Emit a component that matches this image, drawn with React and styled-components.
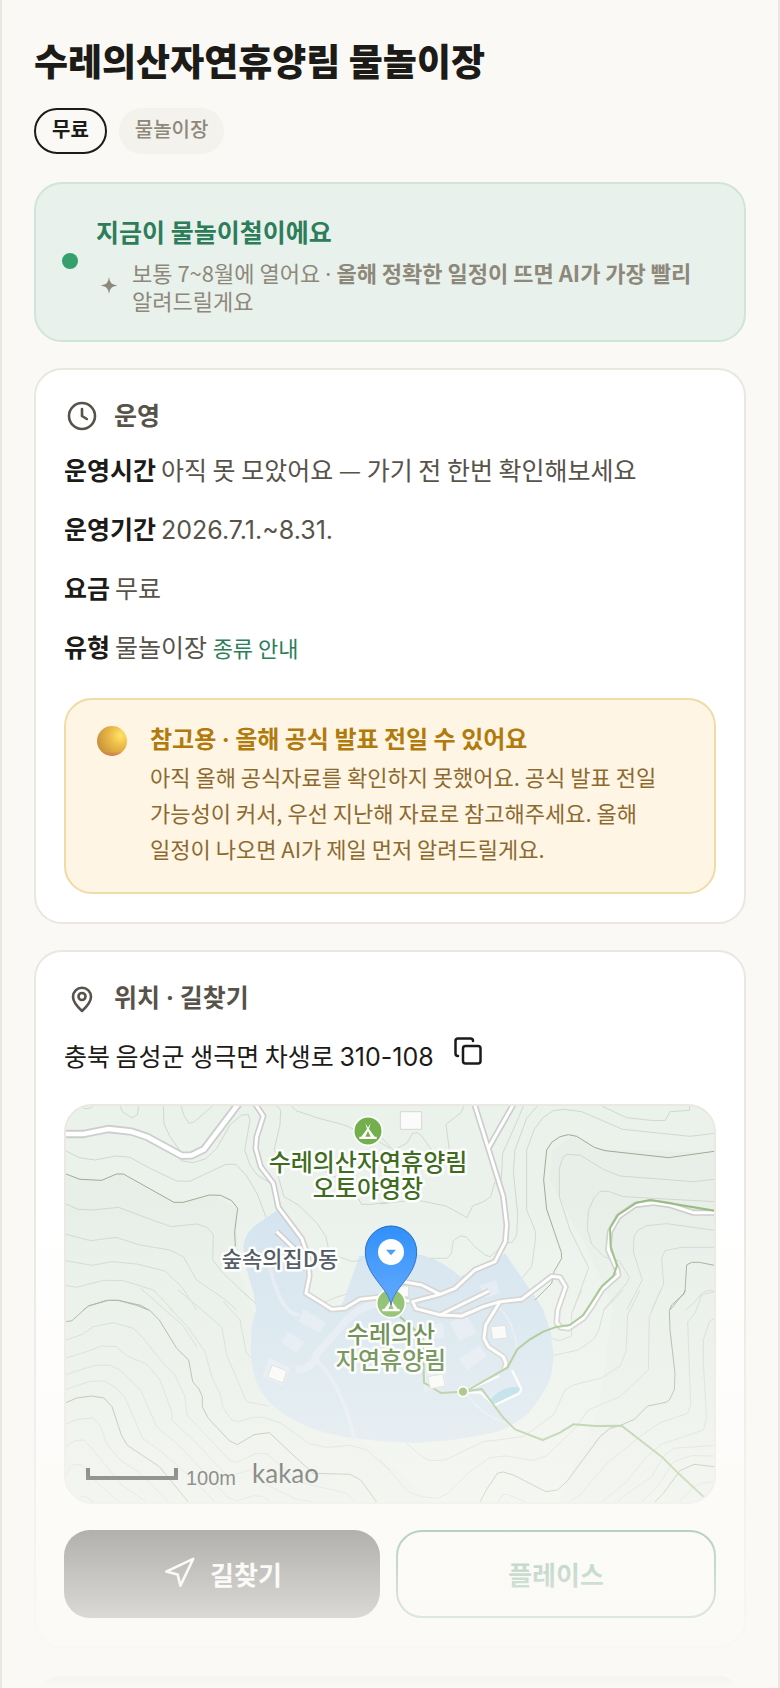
import React from 'react';
import styled, { createGlobalStyle } from 'styled-components';
import { Copy, Navigation } from 'lucide-react';

const GlobalStyle = createGlobalStyle`
    *{
        box-sizing: border-box;
    }
    body{
        margin: 0;
        background: #faf9f5;
        color: #1c1b18;
        font-family: "Noto Sans CJK KR", "Noto Sans", sans-serif;
        word-break: keep-all;
    }
    h1, h2, h3, p, dl, dd{
        margin: 0;
    }
`;

const Page = styled.main`
    position: relative;
    height: 100vh;
    overflow: hidden;
    padding: 36px 32px 0;
    border: solid #e9e7e0;
    border-width: 0 2px;
`;

const PageTitle = styled.h1`
    font-size: 37px;
    line-height: 48px;
    font-weight: 900;
`;

const Chips = styled.div`
    display: flex;
    gap: 12px;
    margin: 24px 0 28px;
`;

const Chip = styled.span`
    display: flex;
    align-items: center;
    height: 46px;
    padding: 0 16px 6px;
    border-radius: 23px;
    border: ${props => props.$outlined ? '2px solid #1c1b18' : 'none'};
    background: ${props => props.$outlined ? 'transparent' : '#f3f2ed'};
    color: ${props => props.$outlined ? '#1c1b18' : '#8e887b'};
    font-size: 20px;
    font-weight: ${props => props.$outlined ? 700 : 500};
`;

const Season = styled.section`
    display: flex;
    align-items: center;
    gap: 18px;
    padding: 24px 26px 26px;
    border: 2px solid #cfe5d9;
    border-radius: 28px;
    background: #e8f1eb;

    h2{
        color: #2d7d5a;
        font-size: 25px;
        line-height: 46px;
    }
`;

const SeasonDot = styled.span`
    flex: none;
    width: 16px;
    height: 16px;
    border-radius: 50%;
    background: #35a06b;
`;

const SeasonNote = styled.div`
    display: flex;
    align-items: center;
    gap: 10px;
    margin-top: 4px;
    color: #8e887b;
    font-size: 22px;
    line-height: 28px;

    svg{
        flex: none;
    }
`;

const Card = styled.section`
    margin-top: 26px;
    padding: 28px;
    border: 2px solid #e9e7e0;
    border-radius: 28px;
    background: #fff;
`;

const CardHeading = styled.header`
    display: flex;
    align-items: center;
    gap: 14px;
    height: 36px;
    margin-bottom: 15px;
    color: #57534a;

    h2{
        padding-bottom: 4px;
        font-size: 25px;
        line-height: 32px;
    }
`;

const InfoList = styled.dl`
    display: flex;
    flex-direction: column;
    gap: 18px;
`;

const InfoRow = styled.div`
    display: flex;
    align-items: baseline;
    gap: 5px;
    height: 41px;
    font-size: 25px;
    line-height: 41px;

    dt{
        font-weight: 700;
    }
    dd{
        color: #57534a;
    }
`;

const Latin = styled.span`
    font-family: Inter, sans-serif;
    line-height: 1;
`;

const GuideLink = styled.a`
    color: #2d7d5a;
    font-size: 22px;
    text-decoration: none;
`;

const Notice = styled.aside`
    display: flex;
    gap: 20px;
    margin-top: 31px;
    padding: 20px 28px 26px;
    border: 2px solid #efdba6;
    border-radius: 28px;
    background: #fff5e4;
    color: #8c6a2f;
    font-size: 22px;
    line-height: 36px;

    svg{
        flex: none;
        margin-top: 3px;
    }
    h3{
        margin-bottom: 2px;
        color: #b17a0d;
        font-size: 24px;
    }
`;

const Address = styled.div`
    display: flex;
    align-items: flex-start;
    gap: 14px;
    height: 50px;
    margin-bottom: 23px;
    font-size: 25px;
    line-height: 48px;
`;

const CopyButton = styled.button`
    display: flex;
    align-items: center;
    justify-content: center;
    width: 40px;
    height: 40px;
    padding: 0;
    border: 0;
    background: none;
    color: #1c1b18;
`;

const MapFrame = styled.div`
    height: 400px;
    overflow: hidden;
    border: 2px solid #ebe7e1;
    border-radius: 28px;
    background: #ebf2ec;

    svg{
        display: block;
        width: 100%;
        height: 100%;
    }
`;

const MapLabel = styled.text`
    fill: ${props => props.$color || '#3f6d1f'};
    stroke: #fff;
    stroke-width: 5px;
    stroke-linejoin: round;
    paint-order: stroke;
    font-size: ${props => props.$small ? 22 : 24}px;
    font-weight: 500;
    text-anchor: middle;
`;

const ScaleText = styled.text`
    font-family: "Liberation Sans", sans-serif;
    font-size: 20px;
`;

const KakaoMark = styled.text`
    font-family: Lato, sans-serif;
    font-size: 26px;
`;

const Actions = styled.div`
    display: flex;
    gap: 16px;
    margin-top: 26px;
`;

const ActionButton = styled.button`
    flex: 1 1 0;
    display: flex;
    align-items: center;
    justify-content: center;
    gap: 14px;
    height: 88px;
    padding: 0 16px 2px;
    border: ${props => props.$primary ? '0' : '2px solid #2d7d5a'};
    border-radius: 26px;
    background: ${props => props.$primary ? '#1c1b18' : '#fff'};
    color: ${props => props.$primary ? '#fff' : '#2d7d5a'};
    font-family: inherit;
    font-size: 26px;
    font-weight: 700;
`;

const NextCard = styled.section`
    height: 120px;
    margin-top: 28px;
    border-radius: 28px;
    background: #1c1b18;
`;

const Fade = styled.div`
    position: absolute;
    left: 0;
    right: 0;
    bottom: 0;
    height: 484px;
    background: linear-gradient(rgba(250, 249, 245, 0), #faf9f5);
    pointer-events: none;
`;

function ClockIcon(){
    return(
        <svg width="36" height="36" fill="none" stroke="currentColor" strokeWidth="2.6" strokeLinecap="round" strokeLinejoin="round" aria-hidden="true">
            <circle cx="18" cy="18" r="13"/>
            <path d="M18 11v7l4.8 3"/>
        </svg>
    )
}

function PinIcon(){
    return(
        <svg width="36" height="36" fill="none" stroke="currentColor" strokeWidth="2.6" strokeLinejoin="round" aria-hidden="true">
            <path d="M18 31C13.6 27 9 22.4 9 16.8a9 9 0 0 1 18 0c0 5.600-4.600 10.200-9 14.200z"/>
            <circle cx="18" cy="16.500" r="3.500"/>
        </svg>
    )
}

function SparkIcon(){
    return(
        <svg width="26" height="26" fill="currentColor" aria-hidden="true">
            <path d="M13 4c1 6 2.500 7.500 8.500 8.500-6 1-7.500 2.500-8.500 8.500-1-6-2.500-7.500-8.500-8.500 6-1 7.500-2.500 8.500-8.500z"/>
        </svg>
    )
}

function BallIcon(){
    return(
        <svg width="36" height="36" aria-hidden="true">
            <defs>
                <radialGradient id="ball" cx="0.78" cy="0.32" r="0.8">
                    <stop offset="0" stopColor="#ffe566"/>
                    <stop offset="0.45" stopColor="#ecbb48"/>
                    <stop offset="1" stopColor="#c9933c"/>
                </radialGradient>
                <linearGradient id="ballShade" x2="0" y2="1">
                    <stop offset="0.85" stopColor="#d8705c" stopOpacity="0"/>
                    <stop offset="1" stopColor="#d8705c" stopOpacity="0.8"/>
                </linearGradient>
            </defs>
            <circle cx="18" cy="18" r="15" fill="url(#ball)"/>
            <circle cx="18" cy="18" r="15" fill="url(#ballShade)"/>
        </svg>
    )
}

// map geometry, split in quarters; every quarter has its own origin, three units to a pixel
const quarters = [
    {
        name: 'nw',
        origin: '-48 -48',
        contours: [
            '95,50 105,56 122,54 128,48',
            '210,48 218,66 246,84 262,74 266,48',
            '340,48 342,102 360,140 392,185',
            '393,48 402,76 416,100 432,96 488,48',
            '48,183 88,203 136,210 196,198 240,202 300,235 380,273 420,274 470,250 528,223 558,223 590,258 622,312 648,382',
            '392,212 430,218 468,206 500,175 540,105 575,75 595,74 600,90 584,180 600,225 622,255 670,285',
            '680,48 692,60 690,105 672,180 690,205 685,260 702,320 745,345 800,398 828,440 835,475',
            '725,48 738,62 810,86 880,104 960,138 1020,175',
            '820,240 880,275 910,300 935,343 965,343 1020,335',
            '48,342 85,358 128,360 206,352 290,384 364,410 440,402 470,412 490,432 488,510 520,550 618,642',
            '48,433 122,452 198,442 270,465 360,480 400,500 440,570 520,625 560,660',
            '48,512 126,526 186,515 260,522 345,543 395,590 440,660',
            '48,586 80,592 160,571 220,572 310,600 368,660',
            '865,500 905,514 935,512',
            '815,640 850,625 890,612'
        ],
        majors: [
            '48,252 90,268 155,271 200,252 220,252 372,337 400,337 478,315 512,316 545,332 563,355 554,425 556,470',
            '100,660 115,648 170,631 205,631 260,646 295,660'
        ]
    },
    {
        name: 'ne',
        origin: '942 -48',
        contours: [
            '252,48 243,68 198,103 208,180',
            '0,138 40,180 80,160 98,130 112,128 125,138 155,180',
            '0,342 100,330 120,332 198,348 261,383 278,348 315,333 332,320 345,275',
            '430,48 412,92 368,190 364,268 352,275',
            '472,48 440,85 405,180 400,245 413,370 410,435 397,457 380,458 330,500 315,495 285,470 258,440 240,438 220,452 214,492 200,505 150,505',
            '425,565 455,530 465,460 467,425 440,360 440,180 463,118 490,82 520,62 550,58 605,65 728,118 930,139 1003,130',
            '665,48 740,83 820,92 856,91 870,65 928,61 930,48',
            '580,660 626,533 570,420 538,320 538,235 550,200 562,193 602,196 670,238 720,258 940,275 1003,268',
            '700,510 672,500 635,462 622,418 625,362 643,322 660,304 685,304 730,320 1003,335',
            '670,660 740,580 748,562 720,515 690,500',
            '740,660 787,570 760,485 762,440 775,420 800,407 860,401 1003,421',
            '815,660 851,582 845,505 855,482 905,472 1003,472',
            '918,660 940,640 968,608 990,600 1003,605'
        ],
        majors: [
            '465,630 515,580 522,545 545,505 544,487 500,358 491,270 500,180 515,157 540,140 565,134 590,139 643,172 675,182 866,203 1003,184',
            '870,660 915,605 920,525 935,517 958,517 1003,526'
        ]
    },
    {
        name: 'sw',
        origin: '-48 552',
        contours: [
            '360,55 415,113 465,185 485,260 510,310 520,355 545,390 565,395 610,382 640,382 690,398 780,462 830,472 900,466 950,480 1020,540',
            '272,-5 400,108 440,170',
            '384,0 430,38 516,112 530,195 562,270 590,335 655,348',
            '572,0 615,38',
            '520,35 570,90 588,185 602,203',
            '48,150 100,132 130,110 190,98 250,115 280,145 340,220 375,255 405,320 411,375 540,512 560,517 620,490 650,492 700,535 760,580 850,600 890,610 915,636',
            '48,204 110,185 155,168 198,170 235,200 290,222 330,270 365,365 365,390 430,450 535,560 600,540 640,580 740,628 785,635',
            '48,254 90,240 135,226 180,226 210,240 272,300 320,410 385,465 480,565 530,620 560,632 612,617 640,620 660,634',
            '48,298 120,274 165,273 200,295 225,323 278,445 340,490 420,560 495,636',
            '48,402 80,388 130,384 150,405 170,460 210,510 265,545 355,636',
            '48,468 75,452 102,450 130,480 210,580 288,636',
            '48,557 60,532 75,522 95,526 110,545 160,595 208,636',
            '85,628 95,618 112,622 132,636'
        ],
        majors: [
            '48,95 66,92 115,48 175,31 205,31 272,46 300,62 328,90 380,175 416,210 428,275 447,297 457,320 457,350 475,385 538,452 562,464 612,434 658,428 740,505 790,550 900,553 932,570 980,636',
            '48,338 80,324 125,318 162,324 186,350 214,435 232,466 328,530 415,636'
        ]
    },
    {
        name: 'se',
        origin: '942 552',
        contours: [
            '605,0 575,70 575,138 538,152 514,145',
            '730,0 672,60 655,125 640,148 595,180 522,196',
            '780,0 743,75 738,185 720,228 662,265 580,285 555,300 522,373 430,440 310,455 195,510 150,512 125,500 80,460',
            '842,0 808,80 805,240 720,320 625,360 590,410 500,497 460,511 375,498 330,503 270,545 200,612 172,625 125,620 85,605 0,510',
            '1003,5 965,15 945,70 923,95 932,345 922,370 840,398 780,440 680,520 600,615 568,636',
            '1003,85 988,95 970,150 970,220 980,385 970,420 845,462 800,500 740,575 665,636',
            '1003,466 880,475 850,500 815,560 740,612 712,636',
            '1003,498 935,497 880,515 840,580 785,636',
            '1003,576 960,580 940,592 895,636',
            '355,636 368,615 380,613 438,636'
        ],
        majors: [
            '915,0 912,12 875,45 868,62 870,120 885,250 883,300 868,330 858,337 803,348 763,388 720,407 690,415 660,440 560,575 532,600 498,605 400,555 370,546 352,550 320,598 300,636',
            '825,636 850,610 900,542 942,523 1003,530'
        ]
    }
];

// roads, trails and buildings share the same units but one origin
const wideRoads = [
    '-10,84 52,84 127,69 197,77 242,92 347,149 377,148 414,130 520,-10'
];

const roads = [
    '565,-10 592,30 572,92 569,127 584,182 622,232 637,304 707,397 727,452 730,512 720,562 797,610 837,607 882,580 937,574 1030,585',
    '632,377 687,430',
    '1224,-10 1267,127 1312,272 1322,357 1318,407 1287,467 1227,492 1167,547 1122,565 1040,587 1050,608 1122,627 1187,630 1252,602 1302,587 1367,580 1457,511 1482,514 1499,542 1475,612 1472,650 1484,664 1507,667 1552,637 1577,602 1607,552 1657,507 1654,492 1627,432 1632,377 1657,332 1707,297 1762,290 1812,297 1882,320 1950,320',
    '1345,-10 1267,127',
    '1000,525 1067,537 1122,565',
    '1122,627 1269,555',
    '1302,587 1259,657 1254,697 1267,722 1312,752 1320,772 1315,790'
];

const trails = [
    '1945,314 1752,282 1712,290 1656,327 1632,367 1634,422 1653,479 1642,510 1609,539 1552,627 1512,657 1467,664 1432,677 1392,700 1354,730 1325,784 1207,852 1192,857',
    '1192,857 1247,849 1312,935 1347,970 1430,1002 1482,980 1522,955 1587,960 1667,959 1787,1052 1837,1102 1914,1174',
    '1192,857 1125,861 1074,830 1070,692 1002,632'
];

const halls = [
    '1003,17 1067,17 1067,70 1003,70',
    '990,540 1028,540 1028,572 990,572',
    '1274,662 1318,658 1324,696 1280,700',
    '1085,812 1130,804 1138,840 1093,848',
    '618,777 663,795 650,831 605,813'
];

const paleLots = [
    '712,610 778,648 762,680 698,646',
    '665,678 716,708 692,742 646,708',
    '1150,650 1200,625 1232,680 1180,705',
    '1178,760 1240,718 1262,750 1205,792',
    '610,755 672,785 652,840 590,810',
    '1075,800 1132,790 1142,840 1075,860',
    '1240,540 1290,522 1302,560 1262,576',
    '1100,655 1130,650 1134,695 1100,700'
];

function TentMark({ x, y, fill }){
    return(
        <g transform={`translate(${x} ${y})`}>
            <circle r="43" fill={fill} stroke="#fff" strokeWidth="5"/>
            <path d="M-8-23 0-10 8-23 3-6 20 17H26V24H-26V17H-20L-3-6z" fill="#fff"/>
            <path d="M0 0 8 17H-8z" fill={fill}/>
        </g>
    )
}

function ForestMap(){
    return(
        <svg viewBox="0 0 648 396" preserveAspectRatio="xMidYMid slice" role="img" aria-label="수레의산자연휴양림 지도">
            <defs>
                <linearGradient id="pin" x2="0" y2="1">
                    <stop offset="0" stopColor="#258bfa"/>
                    <stop offset="1" stopColor="#3b95ff"/>
                </linearGradient>
            </defs>
            <g transform="scale(0.333333)" fill="none" strokeLinejoin="round">
                <path d="M0 210 100 223 165 205 325 290 440 268 510 305 520 500 660 880 900 1010 1100 1188H0zM1480 1188 1600 900 1640 600 1560 420 1450 220 1460 130 1520 90 1600 130 1944 140V1188z" fill="#e8efe9"/>
                <path d="M635 312 562 362Q530 395 532 427L542 492 564 567 570 612 557 662 554 737Q560 830 597 872 640 930 752 972 860 1005 1032 1010 1180 1005 1292 977 1340 960 1382 927 1425 880 1454 817L1463 752 1455 682 1432 612 1412 580 1317 442 1287 467 1227 492 1182 512Q1120 455 1052 444L880 450 837 572 822 607 797 610 722 562 732 512 717 412z" fill="#d4e4ef"/>
                <g stroke="#e1eaf3" strokeWidth="12">
                    <path d="M600 440Q625 550 650 590T700 625"/>
                    <path d="M945 590Q880 600 840 645L752 745Q742 790 690 792" strokeWidth="22"/>
                    <path d="M750 760Q830 840 865 1000"/>
                    <path d="M1300 605Q1345 650 1353 730M1205 868Q1250 930 1320 950" strokeWidth="6"/>
                </g>
                {paleLots.map(lot => <polygon key={lot} points={lot} fill="#e1eaf3"/>)}
                {quarters.map(quarter => (
                    <g key={quarter.name} transform={`translate(${quarter.origin})`} strokeWidth="3">
                        <g stroke="#cfd8cf">
                            {quarter.contours.map(line => <polyline key={line} points={line}/>)}
                        </g>
                        <g stroke="#9eab94">
                            {quarter.majors.map(line => <polyline key={line} points={line}/>)}
                        </g>
                    </g>
                ))}
                <path d="M1270 885Q1310 835 1365 845V862L1285 897z" fill="#a5d6e8"/>
                <path d="M1205 852 1300 810M1338 793 1366 850 1360 862 1285 898 1245 860H1205" stroke="#fff" strokeWidth="7"/>
                <g stroke="#cdcdcd">
                    {wideRoads.map(line => <polyline key={line} points={line} strokeWidth="25"/>)}
                    {roads.map(line => <polyline key={line} points={line} strokeWidth="19"/>)}
                </g>
                <g stroke="#fff">
                    {wideRoads.map(line => <polyline key={line} points={line} strokeWidth="14"/>)}
                    {roads.map(line => <polyline key={line} points={line} strokeWidth="9"/>)}
                </g>
                <g stroke="#98bd82" strokeWidth="6">
                    {trails.map(line => <polyline key={line} points={line}/>)}
                </g>
                {halls.map(hall => <polygon key={hall} points={hall} fill="#fafbfa" stroke="#d5d8d4" strokeWidth="3"/>)}
                <circle cx="1191" cy="857" r="15" fill="#86a84f" stroke="#fff" strokeWidth="5"/>
                <TentMark x={906} y={75} fill="#73af4d"/>
                <TentMark x={975} y={592} fill="#7cb657"/>
                <path d="M975 597C968 545 898 510 898 437a77 77 0 0 1 154 0C1052 510 982 545 975 597z" fill="url(#pin)" stroke="#1a5fc4" strokeWidth="3"/>
                <circle cx="975" cy="438" r="39" fill="#fff"/>
                <path d="M960 431H990L975 448z" fill="#3794fb"/>
            </g>
            <MapLabel>
                <tspan x="302" y="65">수레의산자연휴양림</tspan>
                <tspan x="302" y="91">오토야영장</tspan>
            </MapLabel>
            <MapLabel x="214" y="161" $color="#3f4a54" $small>숲속의집D동</MapLabel>
            <MapLabel>
                <tspan x="325" y="237">수레의산</tspan>
                <tspan x="325" y="263">자연휴양림</tspan>
            </MapLabel>
            <path d="M22 362v10h88v-10" fill="none" stroke="#111" strokeWidth="4"/>
            <ScaleText x="120" y="379">100m</ScaleText>
            <KakaoMark x="186" y="377">kakao</KakaoMark>
        </svg>
    )
}

export default function App(){
    return(
        <>
            <GlobalStyle/>
            <Page>
                <PageTitle>수레의산자연휴양림 물놀이장</PageTitle>
                <Chips>
                    <Chip $outlined>무료</Chip>
                    <Chip>물놀이장</Chip>
                </Chips>
                <Season>
                    <SeasonDot/>
                    <div>
                        <h2>지금이 물놀이철이에요</h2>
                        <SeasonNote>
                            <SparkIcon/>
                            <p>보통 7~8월에 열어요 <Latin>·</Latin> <strong>올해 정확한 일정이 뜨면 AI가 가장 빨리</strong> 알려드릴게요</p>
                        </SeasonNote>
                    </div>
                </Season>
                <Card>
                    <CardHeading>
                        <ClockIcon/>
                        <h2>운영</h2>
                    </CardHeading>
                    <InfoList>
                        <InfoRow>
                            <dt>운영시간</dt>
                            <dd>아직 못 모았어요 — 가기 전 한번 확인해보세요</dd>
                        </InfoRow>
                        <InfoRow>
                            <dt>운영기간</dt>
                            <dd><Latin>2026.7.1.~8.31.</Latin></dd>
                        </InfoRow>
                        <InfoRow>
                            <dt>요금</dt>
                            <dd>무료</dd>
                        </InfoRow>
                        <InfoRow>
                            <dt>유형</dt>
                            <dd>물놀이장 <GuideLink href="#types">종류 안내</GuideLink></dd>
                        </InfoRow>
                    </InfoList>
                    <Notice>
                        <BallIcon/>
                        <div>
                            <h3>참고용 <Latin>·</Latin> 올해 공식 발표 전일 수 있어요</h3>
                            <p>아직 올해 공식자료를 확인하지 못했어요. 공식 발표 전일 가능성이 커서, 우선 지난해 자료로 참고해주세요. 올해 일정이 나오면 AI가 제일 먼저 알려드릴게요.</p>
                        </div>
                    </Notice>
                </Card>
                <Card>
                    <CardHeading>
                        <PinIcon/>
                        <h2>위치 <Latin>·</Latin> 길찾기</h2>
                    </CardHeading>
                    <Address>
                        <span>충북 음성군 생극면 차생로 <Latin>310-108</Latin></span>
                        <CopyButton type="button" aria-label="주소 복사">
                            <Copy size={30}/>
                        </CopyButton>
                    </Address>
                    <MapFrame>
                        <ForestMap/>
                    </MapFrame>
                    <Actions>
                        <ActionButton type="button" $primary>
                            <Navigation size={34} strokeWidth={1.8}/>
                            길찾기
                        </ActionButton>
                        <ActionButton type="button">플레이스</ActionButton>
                    </Actions>
                </Card>
                <NextCard/>
                <Fade/>
            </Page>
        </>
    )
}
